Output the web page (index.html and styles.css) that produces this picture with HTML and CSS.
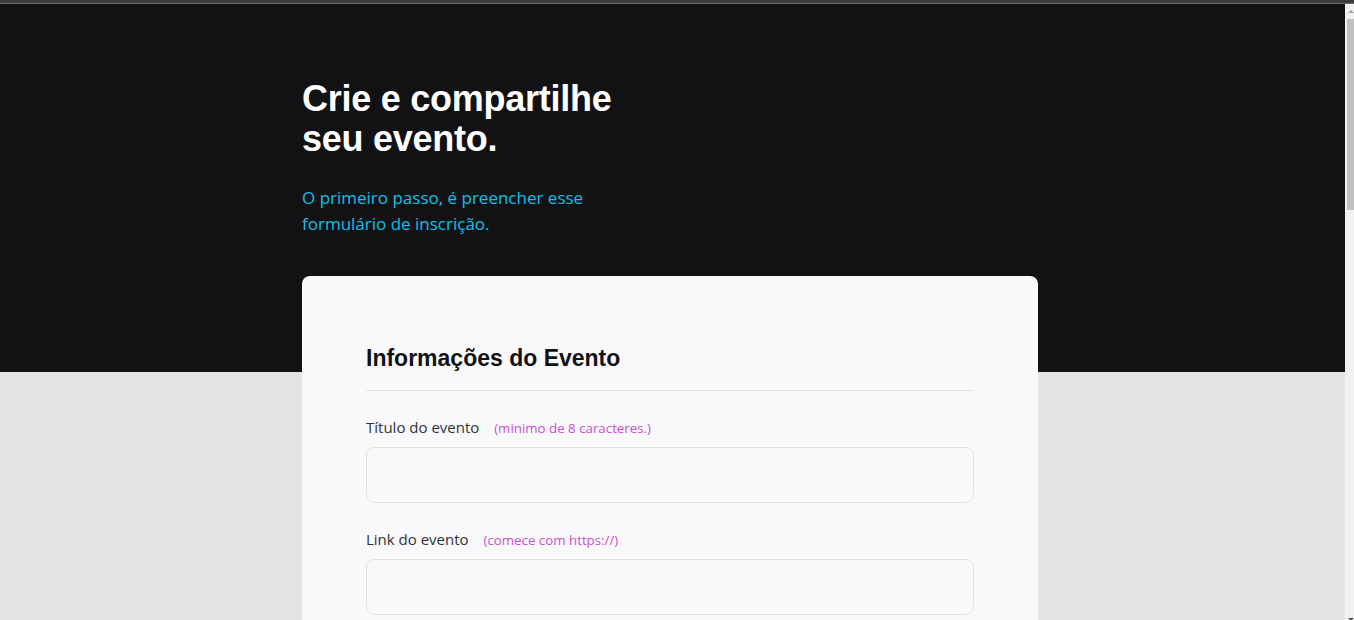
FILE: index.html
```html
<!DOCTYPE html>
<html lang="pt-BR">
<head>
<meta charset="utf-8">
<title>Crie e compartilhe seu evento</title>
<link rel="stylesheet" href="styles.css">
</head>
<body>
<div class="topbar"></div>
<div class="layout">
  <main class="page">
    <div class="container">
      <header class="hero">
        <h1 class="hero-title">Crie e compartilhe seu evento.</h1>
        <p class="hero-text">O primeiro passo, é preencher esse formulário de inscrição.</p>
      </header>
      <form class="card">
        <h2 class="card-title">Informações do Evento</h2>
        <div class="field">
          <label class="field-label" for="title">Título do evento <span class="hint">(minimo de 8 caracteres.)</span></label>
          <input class="field-input" id="title" type="text">
        </div>
        <div class="field">
          <label class="field-label" for="link">Link do evento <span class="hint">(comece com https://)</span></label>
          <input class="field-input" id="link" type="text">
        </div>
      </form>
    </div>
  </main>
  <div class="scrollbar">
    <span class="arrow arrow-up"></span>
    <span class="thumb"></span>
    <span class="arrow arrow-down"></span>
  </div>
</div>
</body>
</html>
```

FILE: styles.css
```css
html, body {
  margin: 0;
  height: 620px;
  overflow: hidden;
}
body {
  font-family: "Open Sans", "Liberation Sans", sans-serif;
  background: #e4e4e4;
}
.topbar {
  height: 3px;
  background: #3d3d3d;
  border-bottom: 1px solid #6b6b6b;
}
.layout {
  display: flex;
  height: 616px;
}
.page {
  flex: 1;
  padding-right: 5px;
  background: linear-gradient(#121214 0 368px, #e4e4e4 368px);
}
.container {
  width: 736px;
  margin: 0 auto;
  padding-top: 75px;
}
.hero-title {
  margin: 0;
  max-width: 340px;
  font-family: "Liberation Sans", Arial, sans-serif;
  font-weight: 700;
  font-size: 36px;
  line-height: 40px;
  letter-spacing: -0.25px;
  color: #ffffff;
}
.hero-text {
  margin: 26px 0 0;
  max-width: 300px;
  font-size: 17px;
  line-height: 26px;
  color: #0ec0ea;
}
.card {
  margin-top: 39px;
  background: #f9f9fb;
  border-radius: 8px;
  padding: 64px 64px 40px;
}
.card-title {
  margin: 0;
  padding-bottom: 14px;
  border-bottom: 1px solid #e1e1e6;
  font-family: "Liberation Sans", Arial, sans-serif;
  font-weight: 700;
  font-size: 23px;
  line-height: 36px;
  color: #121214;
}
.field {
  display: flex;
  flex-direction: column;
  gap: 8px;
  margin-top: 24px;
}
.field-label {
  height: 24px;
  font-size: 15px;
  line-height: 24px;
  color: #323238;
}
.hint {
  margin-left: 11px;
  font-size: 13.3px;
  line-height: 16px;
  color: #c94fd1;
}
.field-input {
  height: 56px;
  box-sizing: border-box;
  border: 1px solid #e1e1e6;
  border-radius: 8px;
  background: #f9f9fb;
  padding: 0 16px;
  font: inherit;
}
.scrollbar {
  width: 9px;
  background: #f1f1f1;
  position: relative;
}
.thumb {
  position: absolute;
  left: 2px;
  right: 0;
  top: 15px;
  height: 191px;
  background: #c1c1c1;
}
.arrow {
  position: absolute;
  left: 3px;
  width: 0;
  height: 0;
  border-left: 3px solid transparent;
  border-right: 3px solid transparent;
}
.arrow-up {
  top: 6px;
  border-bottom: 3px solid #a3a3a3;
}
.arrow-down {
  bottom: -1px;
  border-top: 3px solid #505050;
}
```
